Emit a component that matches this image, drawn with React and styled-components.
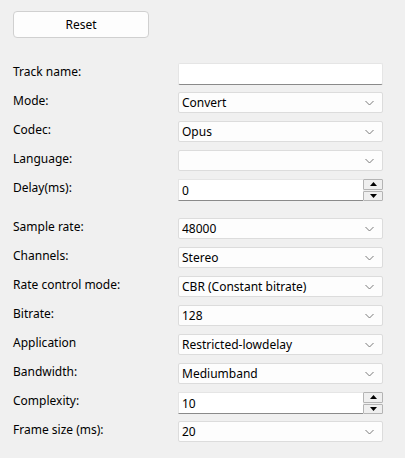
import React from "react";
import styled, { createGlobalStyle } from "styled-components";

const GlobalStyle = createGlobalStyle`
  html, body {
    margin: 0;
    padding: 0;
    background: #f0f0f0;
  }
  body {
    font-family: "Segoe UI", "Noto Sans", "Liberation Sans", sans-serif;
    font-size: 12px;
    color: #000;
  }
`;

const Page = styled.div`
  width: 405px;
  height: 458px;
  padding: 11px 0 0 13px;
  box-sizing: border-box;
  background: #f0f0f0;
`;

const ResetButton = styled.button`
  width: 136px;
  height: 27px;
  border: 1px solid #d0d0d0;
  border-radius: 4px;
  background: #fdfdfd;
  font: inherit;
  font-size: 12px;
  color: #000;
  padding: 0;
`;

const Form = styled.div`
  display: grid;
  grid-template-columns: 165px 205px;
  grid-auto-rows: 21px;
  row-gap: 8px;
  margin-top: ${(p) => p.$top}px;
`;

const Label = styled.div`
  display: flex;
  align-items: center;
  padding-bottom: 5px;
  white-space: nowrap;
`;

const TextInput = styled.div`
  background: #fff;
  border: 1px solid #e5e5e5;
  border-bottom-color: #8a8a8a;
  border-radius: 2px;
  box-sizing: border-box;
  height: 22px;
`;

const Combo = styled.div`
  display: flex;
  align-items: center;
  justify-content: space-between;
  background: #fdfdfd;
  border: 1px solid #dcdcdc;
  border-radius: 2px;
  box-sizing: border-box;
  padding: 0 8px 0 3px;
  height: 21px;
`;

const Spin = styled.div`
  display: flex;
  height: 22px;
`;

const SpinField = styled.div`
  flex: 1;
  display: flex;
  align-items: center;
  background: #fff;
  border: 1px solid #e5e5e5;
  border-bottom-color: #8a8a8a;
  border-right: none;
  box-sizing: border-box;
  padding-left: 3px;
`;

const SpinButtons = styled.div`
  width: 20px;
  display: flex;
  flex-direction: column;
  gap: 1px;
`;

const SpinButton = styled.div`
  flex: 1;
  display: flex;
  align-items: center;
  justify-content: center;
  background: #efefef;
  border: 1px solid #b4b4b4;
  border-radius: 1px;
`;

const Chevron = () => (
  <svg width="9" height="6" viewBox="0 0 9 6">
    <path d="M0.5 1 L4.5 5 L8.5 1" fill="none" stroke="#7a7a7a" strokeWidth="1" />
  </svg>
);

const Tri = ({ up }) => (
  <svg width="7" height="4" viewBox="0 0 7 4">
    <path d={up ? "M3.5 0 L7 4 L0 4 Z" : "M0 0 L7 0 L3.5 4 Z"} fill="#000" />
  </svg>
);

const Field = ({ type, value }) => {
  if (type === "text") return <TextInput />;
  if (type === "spin")
    return (
      <Spin>
        <SpinField>{value}</SpinField>
        <SpinButtons>
          <SpinButton><Tri up /></SpinButton>
          <SpinButton><Tri /></SpinButton>
        </SpinButtons>
      </Spin>
    );
  return (
    <Combo>
      <span>{value}</span>
      <Chevron />
    </Combo>
  );
};

const general = [
  { label: "Track name:", type: "text" },
  { label: "Mode:", value: "Convert" },
  { label: "Codec:", value: "Opus" },
  { label: "Language:", value: "" },
  { label: "Delay(ms):", type: "spin", value: "0" },
];

const opus = [
  { label: "Sample rate:", value: "48000" },
  { label: "Channels:", value: "Stereo" },
  { label: "Rate control mode:", value: "CBR (Constant bitrate)" },
  { label: "Bitrate:", value: "128" },
  { label: "Application", value: "Restricted-lowdelay" },
  { label: "Bandwidth:", value: "Mediumband" },
  { label: "Complexity:", type: "spin", value: "10" },
  { label: "Frame size (ms):", value: "20" },
];

const Rows = ({ rows, top }) => (
  <Form $top={top}>
    {rows.map((r) => (
      <React.Fragment key={r.label}>
        <Label>{r.label}</Label>
        <Field type={r.type} value={r.value} />
      </React.Fragment>
    ))}
  </Form>
);

export default function App() {
  return (
    <Page>
      <GlobalStyle />
      <ResetButton>Reset</ResetButton>
      <Rows rows={general} top={25} />
      <Rows rows={opus} top={18} />
    </Page>
  );
}
